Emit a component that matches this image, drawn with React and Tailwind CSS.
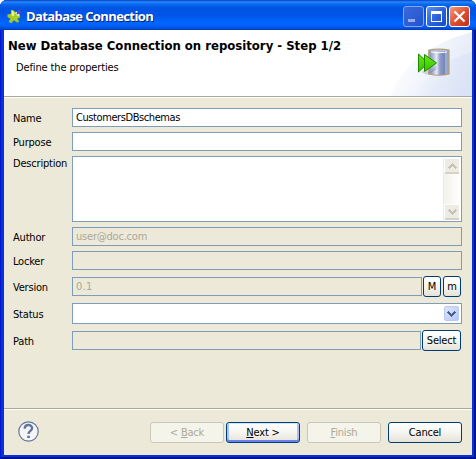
const field = 'border border-[#7f9db9] px-[3px] flex items-center min-w-0 flex-1';
const gloss = 'bg-gradient-to-b from-white via-[#f5f5f1] to-[#e5e2d8]';

function Row({ label, className, children }) {
  return (
    <div className={`flex items-center ${className}`}>
      <div className="w-[59px] shrink-0 whitespace-nowrap pt-[2px]">{label}</div>
      {children}
    </div>
  );
}

function Chevron({ color, up }) {
  return (
    <svg width="9" height="6" viewBox="0 0 9 6" fill="none" shapeRendering="crispEdges">
      <path d={up ? 'M.7 5 4.5 1.3 8.3 5' : 'M.7 1 4.5 4.7 8.3 1'} stroke={color} strokeWidth="2.1" />
    </svg>
  );
}

function SmallButton({ className, children }) {
  return (
    <button className={`flex h-[21px] shrink-0 items-center justify-center rounded-[3px] border border-[#003c74] pt-px ${gloss} ${className}`}>
      {children}
    </button>
  );
}

function AppIcon() {
  return (
    <svg width="16" height="16" viewBox="0 0 16 16">
      <path d="M4.500 2 7.500 3 8.500 6.500 12.500 7 13 9.500 10.300 10.500 12 14 9.500 14 7 12 4.500 15 2 14 3.500 10.500 .7 9 .7 6.500 4.500 6Z" fill="#a9cf24" stroke="#95bb2a" strokeWidth=".5" />
      <path d="M4.500 2.300 7.200 4 7 8 4.500 7.500Z" fill="#f0f483" />
      <path d="m7.500 5 3.500 3.300 2-1.500L9.500 3.700Z" fill="#e9edf5" />
      <path d="m10 6 4.500-5" stroke="#4844b2" strokeWidth="1.600" />
      <path d="m11 2.500 2.800 2.300" stroke="#6861c2" />
    </svg>
  );
}

function DatabaseIcon() {
  return (
    <svg width="32" height="32" viewBox="0 0 32 32">
      <defs>
        <linearGradient id="cyl">
          <stop offset="0" stopColor="#8492b5" />
          <stop offset=".2" stopColor="#a9b5d2" />
          <stop offset=".38" stopColor="#e6ebf7" />
          <stop offset=".55" stopColor="#8e9dcb" />
          <stop offset=".78" stopColor="#7787b4" />
          <stop offset=".8" stopColor="#a3b1d6" />
          <stop offset="1" stopColor="#8c9bc4" />
        </linearGradient>
        <linearGradient id="arrow" x2="0" y2="1">
          <stop offset="0" stopColor="#62ee14" />
          <stop offset="1" stopColor="#36c100" />
        </linearGradient>
      </defs>
      <path d="M10.800 3Q21 1.300 31 3V27Q21 29.500 10.800 27Z" fill="url(#cyl)" stroke="#b89f73" strokeWidth="1.200" />
      <path d="M11.700 3.700Q21 2 30.200 3.700 21 6 11.700 3.700Z" fill="#b5bfd8" />
      <path d="M13 5Q21 6.500 29 5" stroke="#fff" strokeWidth="1" fill="none" />
      <path d="M3 25 10 21 11 26 19 18 18 23 9 28Z" fill="#44506a" opacity=".2" />
      <path d="M.5 7 10 16 .5 25Z" fill="url(#arrow)" stroke="#218700" />
      <path d="M6.500 7.500 18.500 16 6.500 24.500Z" fill="url(#arrow)" stroke="#218700" />
    </svg>
  );
}

export default function App() {
  return (
    <div className="h-[459px] w-[476px] bg-white font-['DejaVu_Sans_Condensed','DejaVu_Sans',sans-serif] text-[11px] leading-[14px] tracking-[-0.2px] text-black">
      <div className="flex h-full flex-col overflow-hidden rounded-t-[7px] bg-[#0831d9] shadow-[inset_1px_0_#0019cf,inset_-2px_0_#00138c,inset_0_-2px_#00138c]">
        <header className="flex h-[30px] shrink-0 items-center bg-[linear-gradient(180deg,#0540c4_0,#2a86fa_2px,#066bf0_4px,#0054e3_8px,#0055e8_15px,#0066ff_23px,#0061f7_26px,#0048d2_29px,#003ab5_30px)] pt-[2px] pr-[6px] pl-[7px]">
          <AppIcon />
          <div className="ml-[3px] flex-1 whitespace-nowrap font-['Open_Sans','Noto_Sans',sans-serif] text-[13px] font-bold leading-[16px] tracking-[-0.6px] text-white [text-shadow:1px_1px_#0a246a]">Database Connection</div>
          <div className="flex gap-[2px]">
            <div className="flex h-[21px] w-[21px] items-end rounded-[3px] border border-[#83a5ef] bg-gradient-to-br from-[#3969dc] to-[#2454cc] pb-[4px] pl-[4px]"><span className="h-[3px] w-[7px] bg-[#96adec]" /></div>
            <div className="flex h-[21px] w-[21px] items-center justify-center rounded-[3px] border border-white bg-gradient-to-br from-[#5d91f5] via-[#2d62df] to-[#1749c8]"><span className="h-[11px] w-[11px] border border-t-[3px] border-white" /></div>
            <div className="flex h-[21px] w-[21px] items-center justify-center rounded-[3px] border border-white bg-gradient-to-br from-[#ef987d] via-[#e15030] to-[#bd3010]">
              <svg width="13" height="13" viewBox="0 0 13 13"><path d="m1.500 1.500 10 10m0-10-10 10" stroke="#fff" strokeWidth="2.200" /></svg>
            </div>
          </div>
        </header>

        <main className="mx-[4px] mb-[4px] flex flex-1 flex-col bg-[#ece9d8]">
          <section className="relative flex h-[66px] shrink-0 justify-between overflow-hidden bg-white">
            <svg className="absolute top-0 right-0" width="100" height="66" viewBox="0 0 100 66">
              <defs>
                <linearGradient id="wash" gradientUnits="userSpaceOnUse" x1="25" y1="20" x2="100" y2="60">
                  <stop offset="0" stopColor="#dfe6f7" stopOpacity="0" />
                  <stop offset="1" stopColor="#dfe6f7" />
                </linearGradient>
                <linearGradient id="wash2" gradientUnits="userSpaceOnUse" x1="45" y1="35" x2="100" y2="50">
                  <stop offset="0" stopColor="#d5dff5" stopOpacity="0" />
                  <stop offset="1" stopColor="#d5dff5" stopOpacity=".6" />
                </linearGradient>
              </defs>
              <path d="M18 66Q38 18 100 2V66Z" fill="url(#wash)" />
              <path d="M42 66Q62 32 100 22V66Z" fill="url(#wash2)" />
            </svg>
            <div className="relative whitespace-nowrap pt-[7px] pl-[4px]">
              <h1 className="font-['DejaVu_Sans_Condensed','DejaVu_Sans',sans-serif] text-[13px] font-bold leading-[17px] tracking-[-0.01px]">New Database Connection on repository - Step 1/2</h1>
              <p className="mt-[7px] ml-[8px] tracking-[-0.13px]">Define the properties</p>
            </div>
            <div className="relative mt-[17px] mr-[22px]"><DatabaseIcon /></div>
          </section>

          <form className="flex flex-1 flex-col border-t border-[#aca899] pt-[11px] pr-[10px] pl-[9px] shadow-[inset_0_1px_#fff]">
            <Row label="Name" className="h-[19px]"><div className={`${field} h-[19px] bg-white pt-px tracking-[-0.42px]`}>CustomersDBschemas</div></Row>
            <Row label="Purpose" className="mt-[5px] h-[19px]"><div className={`${field} h-[19px] bg-white`} /></Row>
            <div className="mt-[5px] flex h-[66px]">
              <div className="w-[59px] shrink-0 whitespace-nowrap pt-px">Description</div>
              <div className="flex flex-1 justify-end border border-[#7f9db9] bg-white p-px">
                <div className="flex w-[17px] flex-col justify-between border-l border-[#eeede5] bg-gradient-to-r from-[#f3f2ec] to-[#fefefb]">
                  <div className="flex h-[16px] items-center justify-center rounded-[2px] border border-b-2 border-white border-b-[#d5d2c2] bg-[#edece4]"><Chevron up color="#c5c2b3" /></div>
                  <div className="flex h-[16px] items-center justify-center rounded-[2px] border border-b-2 border-white border-b-[#d5d2c2] bg-[#edece4]"><Chevron color="#c5c2b3" /></div>
                </div>
              </div>
            </div>
            <Row label="Author" className="mt-[5px] h-[19px]"><div className={`${field} h-[19px] pt-px text-[#aca899]`}>user@doc.com</div></Row>
            <Row label="Locker" className="mt-[5px] h-[19px]"><div className={`${field} h-[19px]`} /></Row>
            <Row label="Version" className="mt-[6px] h-[21px]">
              <div className={`${field} h-[19px] pt-px tracking-[0.3px] text-[#aca899]`}>0.1</div>
              <SmallButton className="ml-px w-[18px]">M</SmallButton>
              <SmallButton className="mr-px ml-[2px] w-[18px]">m</SmallButton>
            </Row>
            <Row label="Status" className="mt-[6px] h-[21px]">
              <div className="flex h-[21px] flex-1 justify-end border border-[#7f9db9] bg-white p-px">
                <div className="m-px flex w-[15px] items-center justify-center rounded-[2px] border border-[#b7c9f4] bg-gradient-to-br from-[#dce6ff] to-[#b3c7f8]"><Chevron color="#4d6185" /></div>
              </div>
            </Row>
            <Row label="Path" className="mt-[6px] h-[21px]">
              <div className={`${field} h-[19px]`} />
              <SmallButton className="mr-px ml-px w-[39px]">Select</SmallButton>
            </Row>
          </form>

          <footer className="flex h-[47px] shrink-0 border-t border-[#aca899] pt-[13px] pr-[10px] pl-[14px] shadow-[inset_0_1px_#fff]">
            <svg className="-mt-px" width="21" height="21" viewBox="0 0 21 21">
              <circle cx="10.500" cy="10.500" r="9.700" fill="#f5f5f5" stroke="#61779c" strokeWidth="1.200" />
              <path d="M6.700 7.700C6.700 2.700 14.300 3 14.100 7.300 14 10 10.500 9.900 10.500 13" fill="none" stroke="#61779c" strokeWidth="2.400" />
              <path d="M9.200 14.700h2.700v2.400H9.200z" fill="#61779c" />
            </svg>
            <div className="ml-auto flex">
              <button className="h-[21px] w-[74px] rounded-[3px] border border-[#c9c7ba] bg-[#f5f4ea] pt-px text-[#aca899]">&lt; <u>B</u>ack</button>
              <button className={`ml-[2px] h-[21px] w-[74px] rounded-[3px] border border-[#003c74] pt-px shadow-[inset_0_1px_#cee7ff,inset_0_-2px_#6982ee,inset_2px_0_#a9c2f5,inset_-2px_0_#a9c2f5] ${gloss}`}><u>N</u>ext &gt;</button>
              <button className="ml-[7px] h-[21px] w-[74px] rounded-[3px] border border-[#c9c7ba] bg-[#f5f4ea] pt-px text-[#aca899]"><u>F</u>inish</button>
              <button className={`ml-[7px] h-[21px] w-[74px] rounded-[3px] border border-[#003c74] pt-px ${gloss}`}>Cancel</button>
            </div>
          </footer>
        </main>
      </div>
    </div>
  );
}
